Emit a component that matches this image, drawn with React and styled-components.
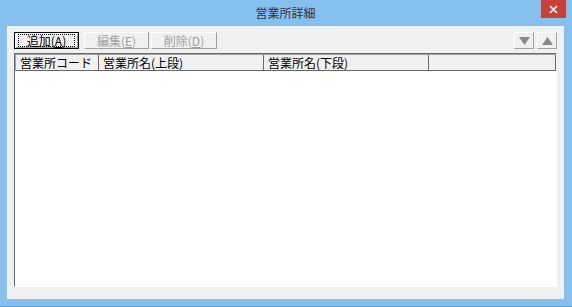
import React from 'react';
import styled, { createGlobalStyle } from 'styled-components';

const GlobalStyle = createGlobalStyle`
  html, body { margin: 0; padding: 0; background: #86c0ef; }
  body {
    font-family: "Noto Sans CJK JP", "Noto Sans", sans-serif;
    font-size: 12px;
    color: #000;
  }
`;

const columns = [
  { label: '営業所コード', width: 83 },
  { label: '営業所名(上段)', width: 165 },
  { label: '営業所名(下段)', width: 165 },
];

const App = () => (
  <>
    <GlobalStyle />
    <Window>
      <TitleBar>
        <Title>営業所詳細</Title>
        <CloseButton>
          <svg width="9" height="9" viewBox="0 0 9 9">
            <path d="M1 1 L8 8 M8 1 L1 8" stroke="#fff" strokeWidth="1.6" />
          </svg>
        </CloseButton>
      </TitleBar>
      <Client>
        <Toolbar>
          <Button $default $width={65}>
            <Focus>追加(<u>A</u>)</Focus>
          </Button>
          <Button $disabled $width={65} $ml={5}>編集(<u>E</u>)</Button>
          <Button $disabled $width={66} $ml={2}>削除(<u>D</u>)</Button>
          <Spacer />
          <ArrowButton>
            <svg width="11" height="8" viewBox="0 0 11 8"><path d="M0 0 H11 L5.5 8 Z" fill="#8a8a8a" /></svg>
          </ArrowButton>
          <ArrowButton $ml={3}>
            <svg width="11" height="8" viewBox="0 0 11 8"><path d="M0 8 H11 L5.5 0 Z" fill="#8a8a8a" /></svg>
          </ArrowButton>
        </Toolbar>
        <ListView>
          <Header>
            {columns.map((c) => (
              <HeaderCell key={c.label} $width={c.width}>{c.label}</HeaderCell>
            ))}
            <HeaderCell $fill />
          </Header>
          <ListBody />
        </ListView>
      </Client>
    </Window>
  </>
);

const Window = styled.div`
  width: 572px;
  height: 307px;
  box-sizing: border-box;
  display: flex;
  flex-direction: column;
  background: #86c0ef;
  padding: 0 8px 7px 7px;
  border-bottom: 1px solid #64a3da;
`;

const TitleBar = styled.div`
  height: 26px;
  display: flex;
  align-items: center;
  justify-content: center;
  position: relative;
`;

const Title = styled.div`
  font-size: 12px;
  color: #333;
  margin-top: -1px;
`;

const CloseButton = styled.div`
  position: absolute;
  top: 0;
  right: -2px;
  width: 25px;
  height: 18px;
  background: #c9403a;
  display: flex;
  align-items: center;
  justify-content: center;
`;

const Client = styled.div`
  flex: 1;
  background: #f0f0f0;
  display: flex;
  flex-direction: column;
  padding: 6px 7px 12px 7px;
  box-sizing: border-box;
`;

const Toolbar = styled.div`
  display: flex;
  align-items: center;
  height: 17px;
`;

const Spacer = styled.div` flex: 1; `;

const Button = styled.div`
  width: ${(p) => p.$width}px;
  height: 17px;
  margin-left: ${(p) => p.$ml || 0}px;
  box-sizing: border-box;
  display: flex;
  align-items: center;
  justify-content: center;
  background: #f0f0f0;
  color: ${(p) => (p.$disabled ? '#a0a0a0' : '#000')};
  font-size: 12px;
  line-height: 1;
  border: 1px solid;
  border-color: ${(p) => (p.$default ? '#000' : '#fff #a0a0a0 #a0a0a0 #fff')};
  box-shadow: ${(p) => (p.$default ? 'inset 1px 1px #fff, inset -1px -1px #a0a0a0' : 'none')};
  u { text-decoration: underline; }
`;

const Focus = styled.span`
  border: 1px dotted #000;
  height: 13px;
  width: 57px;
  display: flex;
  align-items: center;
  justify-content: center;
  box-sizing: border-box;
`;

const ArrowButton = styled.div`
  width: 20px;
  height: 17px;
  margin-left: ${(p) => p.$ml || 0}px;
  box-sizing: border-box;
  display: flex;
  align-items: center;
  justify-content: center;
  background: #f0f0f0;
  border: 1px solid;
  border-color: #fff #a0a0a0 #a0a0a0 #fff;
`;

const ListView = styled.div`
  margin-top: 4px;
  flex: 1;
  display: flex;
  flex-direction: column;
  border: 1px solid;
  border-color: #696969 #fff #fff #696969;
  box-shadow: inset 1px 1px #a0a0a0;
  background: #fff;
  box-sizing: border-box;
`;

const Header = styled.div`
  display: flex;
  height: 15px;
  background: #f0f0f0;
  border-bottom: 1px solid #696969;
  margin: 1px 0 0 1px;
`;

const HeaderCell = styled.div`
  width: ${(p) => (p.$fill ? 'auto' : `${p.$width}px`)};
  flex: ${(p) => (p.$fill ? 1 : 'none')};
  box-sizing: border-box;
  border-right: 1px solid #696969;
  padding-left: 4px;
  font-size: 12px;
  line-height: 15px;
  white-space: nowrap;
`;

const ListBody = styled.div`
  flex: 1;
  background: #fff;
`;

export default App;
